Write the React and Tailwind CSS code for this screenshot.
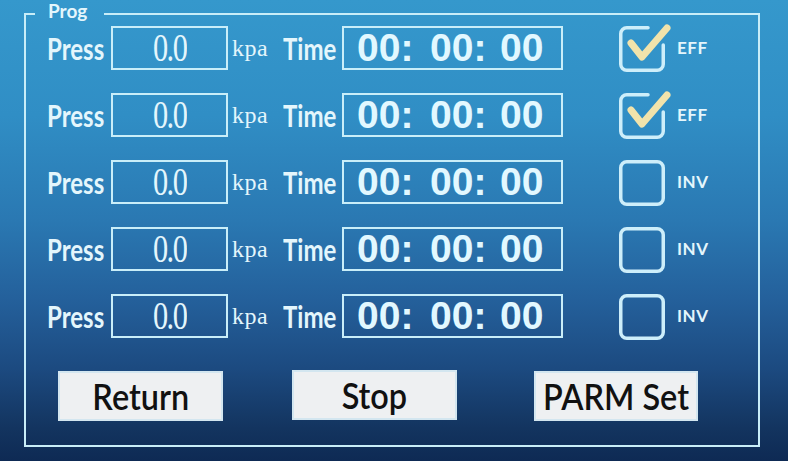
import React from "react";

const rows = [
  { checked: true, label: "EFF" },
  { checked: true, label: "EFF" },
  { checked: false, label: "INV" },
  { checked: false, label: "INV" },
  { checked: false, label: "INV" },
];

function Check({ checked }) {
  return (
    <svg width="54" height="50" viewBox="0 0 54 50" className="ml-[54px] shrink-0">
      {checked ? (
        <>
          <path
            d="M31 4.75H9.75A6 6 0 0 0 3.75 10.75V41.25A6 6 0 0 0 9.75 47.25H40.25A6 6 0 0 0 46.25 41.25V22"
            fill="none"
            stroke="#cdeefa"
            strokeWidth="3.5"
            strokeLinecap="round"
          />
          <path
            d="M14 20L25 34L50 5"
            fill="none"
            stroke="#f1e3ab"
            strokeWidth="7"
            strokeLinecap="round"
            strokeLinejoin="round"
          />
        </>
      ) : (
        <rect x="3.75" y="4.75" width="42.5" height="42.5" rx="6" fill="none" stroke="#cdeefa" strokeWidth="3.5" />
      )}
    </svg>
  );
}

function Row({ checked, label }) {
  return (
    <div className="flex h-[44px] items-center">
      <div className="w-[64px] shrink-0 whitespace-nowrap">
        <span className="inline-block origin-left scale-x-[0.8] font-['Lato',sans-serif] text-[30px] font-bold">Press</span>
      </div>
      <div className="flex h-[44px] w-[117px] shrink-0 items-center justify-center border-2 border-[#c9eef9]">
        <span className="inline-block scale-x-[0.74] font-['Liberation_Serif',serif] text-[41px] tracking-[-2px]">0.0</span>
      </div>
      <div className="w-[55px] shrink-0 pl-[4px]">
        <span className="font-['Liberation_Serif',serif] text-[24px] tracking-[0.5px]">kpa</span>
      </div>
      <div className="w-[59px] shrink-0 whitespace-nowrap">
        <span className="inline-block origin-left scale-x-[0.8] font-['Lato',sans-serif] text-[30px] font-bold">Time</span>
      </div>
      <div className="flex h-[44px] w-[221px] shrink-0 items-center whitespace-pre border-2 border-[#c9eef9] pl-[13px] font-['Liberation_Sans',sans-serif] text-[39px] font-bold text-[#e2f8ff]">
        <span className="inline-block w-[73px]">00: </span>
        <span className="inline-block w-[70px]">00: </span>
        <span className="inline-block">00</span>
      </div>
      <Check checked={checked} />
      <span className="ml-[6px] font-['Lato',sans-serif] text-[17px] font-bold tracking-[0.5px]">{label}</span>
    </div>
  );
}

function Btn({ children, className }) {
  return (
    <div
      className={
        "flex h-[50px] shrink-0 items-center justify-center border-2 border-[#d3e6f0] bg-[#eef0f2] text-[#111] " +
        className
      }
    >
      <span className="inline-block scale-x-[0.9] whitespace-nowrap font-['Lato',sans-serif] text-[36px] font-semibold">{children}</span>
    </div>
  );
}

export default function App() {
  return (
    <div className="h-[461px] w-[788px] overflow-hidden bg-[linear-gradient(180deg,#3598cc_0%,#308ec5_25%,#2a78b2_48%,#24609b_65%,#1c4a80_80%,#13345f_93%,#0e2a54_100%)] pt-[1px] font-['Open_Sans',sans-serif] text-[#e4f6fc]">
      <fieldset className="ml-[24px] h-[446px] w-[736px] border-2 border-[#c8edf8]">
        <legend className="ml-[9px] pb-[6px] pl-[13px] pr-[17px] font-['Lato',sans-serif] text-[19px] font-bold leading-[20px]">Prog</legend>
        <div className="-mt-[1px] pl-[21px]">
          <div className="flex flex-col gap-[23px]">
            {rows.map((r, i) => (
              <Row key={i} {...r} />
            ))}
          </div>
          <div className="mt-[33px] flex">
            <Btn className="ml-[11px] w-[165px]">Return</Btn>
            <Btn className="ml-[69px] w-[165px] -translate-y-[1px]">Stop</Btn>
            <Btn className="ml-[77px] w-[164px]">PARM Set</Btn>
          </div>
        </div>
      </fieldset>
    </div>
  );
}
